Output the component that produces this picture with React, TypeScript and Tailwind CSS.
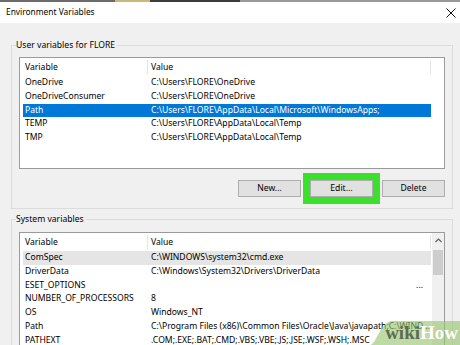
import React from "react";

type RowProps = { name: string; value: string; selected?: boolean; hover?: boolean; extra?: React.ReactNode };

function Row({ name, value, selected, hover, extra }: RowProps) {
  const bg = selected ? "bg-[#0078d7] text-white" : hover ? "bg-[#e5e5e5] text-black" : "text-black";
  return (
    <div className={`relative flex h-[13.8px] w-[408px] shrink-0 items-center leading-[13.8px] ${bg}`}>
      <div className="w-[124px] shrink-0 overflow-hidden whitespace-nowrap pl-[2px]">{name}</div>
      <div className="w-[284px] shrink-0 overflow-hidden text-ellipsis whitespace-nowrap pl-[4px]">{value}</div>
      {extra}
    </div>
  );
}

function Header() {
  return (
    <div className="flex h-[18px] w-[408px] shrink-0 items-center text-black">
      <div className="w-[124px] shrink-0 pl-[2px]">Variable</div>
      <div className="flex h-[14px] w-[284px] shrink-0 items-center border-l border-r border-[#e5e5e5] pl-[3px]">Value</div>
    </div>
  );
}

function Button({ label }: { label: string }) {
  return (
    <div className="flex h-[17px] w-[63px] items-center justify-center border border-[#adadad] bg-[#e1e1e1] text-black">
      {label}
    </div>
  );
}

export default function App() {
  return (
    <div className="relative flex h-[345px] w-[460px] flex-col overflow-hidden bg-[#f0f0f0] font-['Noto_Sans',sans-serif] text-[8.6px] leading-normal">
      {/* background strip */}
      <div className="flex h-[2px] shrink-0">
        <div className="w-[115px] bg-[#6b6b6b]" />
        <div className="w-[35px] bg-[#c9b877]" />
        <div className="w-[90px] bg-[#3c3c3c]" />
        <div className="flex-1 bg-[#9a9a9a]" />
      </div>
      {/* title bar */}
      <div className="flex h-[21px] shrink-0 items-center justify-between bg-white pl-[6px] pr-[3px]">
        <span className="text-[8.4px] text-black">Environment Variables</span>
        <svg width="10" height="10" viewBox="0 0 10 10" className="mr-[1px]">
          <path d="M0.5 0.5 L9.5 9.5 M9.5 0.5 L0.5 9.5" stroke="#111" strokeWidth="1" fill="none" />
        </svg>
      </div>
      {/* body */}
      <div className="flex flex-1 flex-col px-[11px]">
        {/* User variables group */}
        <div className="relative mt-[22px] flex w-[442px] flex-col border border-[#dcdcdc] px-[7px] pb-[11px] pt-[11px]">
          <span className="absolute -top-[7px] left-[4px] bg-[#f0f0f0] pr-[2px] leading-[12px] text-black">User variables for FLORE</span>
          <div className="flex h-[112px] w-[426px] flex-col border border-[#9a9a9a] bg-white pl-[3px]">
            <Header />
            <Row name="OneDrive" value="C:\Users\FLORE\OneDrive" />
            <Row name="OneDriveConsumer" value="C:\Users\FLORE\OneDrive" />
            <Row name="Path" value="C:\Users\FLORE\AppData\Local\Microsoft\WindowsApps;" selected />
            <Row name="TEMP" value="C:\Users\FLORE\AppData\Local\Temp" />
            <Row name="TMP" value="C:\Users\FLORE\AppData\Local\Temp" />
          </div>
          <div className="mt-[11px] flex justify-end gap-[9px]">
            <Button label="New..." />
            <div className="relative">
              <Button label="Edit..." />
              <div className="absolute -inset-[7px] border-[7px] border-[#3ae02b]" />
            </div>
            <Button label="Delete" />
          </div>
        </div>
        {/* System variables group */}
        <div className="relative mt-[10px] flex w-[442px] flex-1 flex-col border border-b-0 border-[#dcdcdc] px-[7px] pt-[12px]">
          <span className="absolute -top-[7px] left-[4px] bg-[#f0f0f0] pr-[2px] leading-[12px] text-black">System variables</span>
          <div className="flex h-[140px] w-[426px] border border-[#9a9a9a] bg-white">
            <div className="flex flex-1 flex-col pl-[3px]">
              <Header />
              <Row name="ComSpec" value="C:\WINDOWS\system32\cmd.exe" hover />
              <Row name="DriverData" value="C:\Windows\System32\Drivers\DriverData" />
              <Row
                name="ESET_OPTIONS"
                value=""
                extra={<span className="absolute right-[8px] top-0 text-black">...</span>}
              />
              <Row name="NUMBER_OF_PROCESSORS" value="8" />
              <Row name="OS" value="Windows_NT" />
              <Row name="Path" value="C:\Program Files (x86)\Common Files\Oracle\Java\javapath;C:\WINDOWS\system32" />
              <Row name="PATHEXT" value=".COM;.EXE;.BAT;.CMD;.VBS;.VBE;.JS;.JSE;.WSF;.WSH;.MSC" />
            </div>
            <div className="flex w-[12px] flex-col items-center bg-[#f0f0f0]">
              <div className="flex h-[14px] w-full items-center justify-center">
                <svg width="7" height="5" viewBox="0 0 7 5">
                  <path d="M0.5 4 L3.5 1 L6.5 4" stroke="#606060" strokeWidth="1.2" fill="none" />
                </svg>
              </div>
              <div className="mt-[3px] h-[25px] w-[10px] bg-[#cdcdcd]" />
            </div>
          </div>
        </div>
      </div>
      {/* wikiHow watermark */}
      <div className="absolute bottom-0 right-0 h-[24px] w-[90px]">
        <svg width="90" height="24" viewBox="0 0 90 24" className="absolute inset-0">
          <path d="M0 24 C 6 24, 10 1, 22 0 L 90 0 L 90 24 Z" fill="rgba(150,196,110,0.62)" />
        </svg>
        <div className="absolute bottom-[3px] right-[2px] flex font-['Liberation_Serif',serif] text-[19px] font-bold leading-none">
          <span className="text-[#5d6b52]">wiki</span>
          <span className="text-white">How</span>
        </div>
      </div>
    </div>
  );
}
